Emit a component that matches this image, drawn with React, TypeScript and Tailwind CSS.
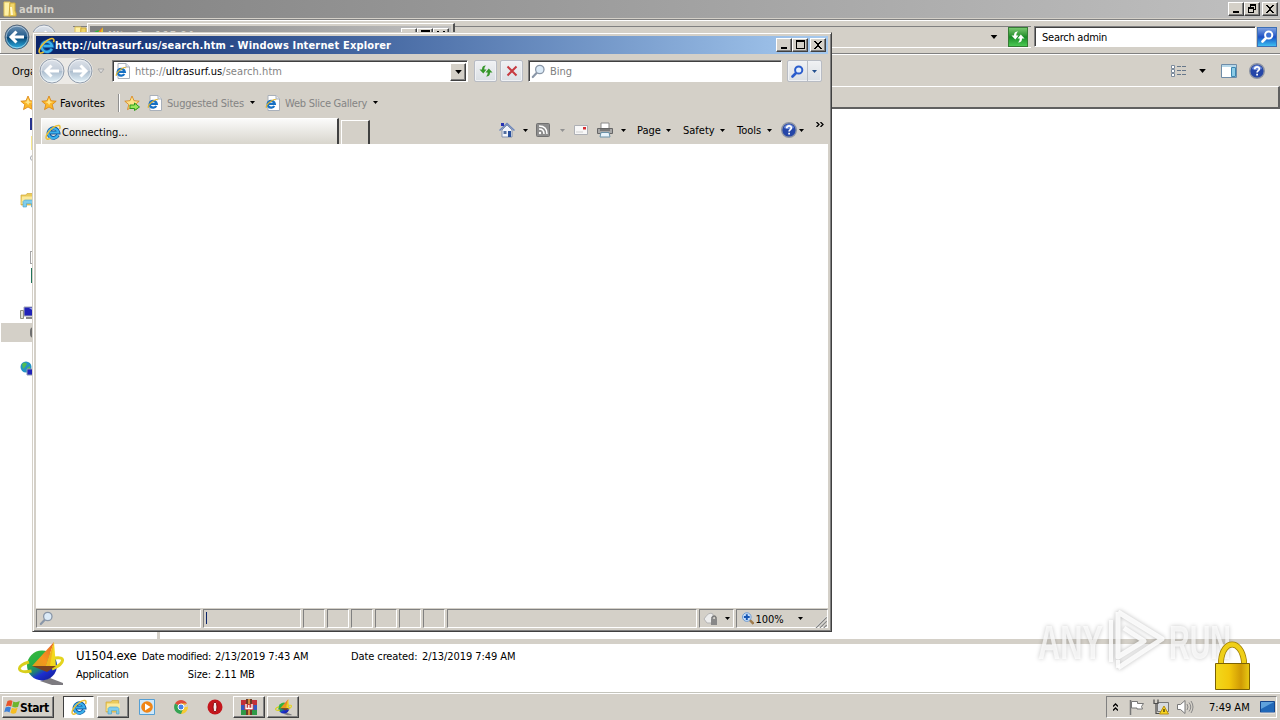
import type { ReactNode } from "react";
import clsx from "clsx";

const raised =
  "border border-t-white border-l-white border-r-[#404040] border-b-[#404040] bg-[#d4d0c8] shadow-[inset_-1px_-1px_0_#808080]";
const sunken =
  "border border-t-[#808080] border-l-[#808080] border-r-white border-b-white";
const field =
  "border border-t-[#808080] border-l-[#808080] border-r-white border-b-white bg-white shadow-[inset_1px_1px_0_#404040]";

function Caret({ className = "" }: { className?: string }) {
  return (
    <svg className={clsx("h-[3px] w-[5px] shrink-0", className)} viewBox="0 0 5 3">
      <path d="M0 0h5L2.5 3z" fill="currentColor" />
    </svg>
  );
}

function IeIcon({ className = "h-4 w-4" }: { className?: string }) {
  return (
    <svg className={clsx("shrink-0", className)} viewBox="0 0 16 16">
      <path
        d="M13 11.200A5 4.800 0 1 1 13.500 8.600H5"
        fill="none"
        stroke="#10579f"
        strokeWidth="3.800"
      />
      <path
        d="M13 11A5 4.800 0 1 1 13.300 8.500H5"
        fill="none"
        stroke="#3bb0ec"
        strokeWidth="2.200"
      />
      <path
        d="M14.600 5C16 1.300 13.500.2 9 3 4.600 6 .2 11.500 1.200 14.300c.6 1.500 2.600.8 4.100-.2"
        fill="none"
        stroke="#ebbf33"
        strokeWidth="1.500"
      />
    </svg>
  );
}

function IePage() {
  return (
    <svg className="h-4 w-4 shrink-0" viewBox="0 0 16 16">
      <path d="M3 .5h8l3.500 3.500v11.500H3z" fill="#fff" stroke="#a9b0ba" />
      <path d="M11 .5V4h3.500" fill="#e4e8ee" stroke="#a9b0ba" />
      <path d="M9.300 11A3.600 3.400 0 1 1 9.800 8.800H3.500" fill="none" stroke="#1670c4" strokeWidth="2.300" />
      <path d="M11 5C9.500 3 .5 9 1.300 12.800" fill="none" stroke="#dcb332" strokeWidth="1.200" />
    </svg>
  );
}

function Star({ arrow = false }: { arrow?: boolean }) {
  return (
    <svg className="h-4 w-4 shrink-0" viewBox="0 0 16 16">
      <path
        d="M8 1l2 4.700 5.200.5-4 3.400 1.300 5L8 12l-4.500 2.600 1.300-5-4-3.400L6 5.700z"
        fill={arrow ? "#fbe08a" : "#fbb829"}
        stroke="#d98312"
        strokeWidth=".8"
      />
      <path d="M8 3l1.200 3.500 3 .5-3 1-1 2-1.500-2-2.500-1 2.500-.5z" fill="#ffe48a" />
      {arrow && <path d="M6 10h4.500V8l5 4-5 3.500v-2H6z" fill="#9be65a" stroke="#2c9a1c" />}
    </svg>
  );
}

function Magnifier({ color = "#8a97a8", fill = "#dcebf8" }: { color?: string; fill?: string }) {
  return (
    <svg className="h-[15px] w-[15px] shrink-0" viewBox="0 0 15 15">
      <path d="M5.800 8.800L1.800 13" stroke={color} strokeWidth="2.200" strokeLinecap="round" />
      <circle cx="8.800" cy="5.500" r="4.200" fill={fill} stroke={color} strokeWidth="1.300" />
    </svg>
  );
}

// small bold lens used on the search buttons
function SearchLens({ color, fill }: { color: string; fill: string }) {
  return (
    <svg className="h-[13px] w-[13px] shrink-0" viewBox="0 0 13 13">
      <path d="M5 8L1.500 11.500" stroke={color} strokeWidth="2.600" strokeLinecap="round" />
      <circle cx="7.700" cy="5" r="3.600" fill={fill} stroke={color} strokeWidth="2" />
    </svg>
  );
}

function Orb({ flip = false, blue = false }: { flip?: boolean; blue?: boolean }) {
  return (
    <svg className="h-[26px] w-[26px] shrink-0" viewBox="0 0 26 26">
      <defs>
        <linearGradient id={blue ? "orbBlue" : "orbGray"} x2="0" y2="1">
          <stop offset="0" stopColor={blue ? "#7395b5" : "#dde2e9"} />
          <stop offset=".48" stopColor={blue ? "#235c8c" : "#c3cdd9"} />
          <stop offset=".5" stopColor={blue ? "#06406f" : "#abbccd"} />
          <stop offset="1" stopColor={blue ? "#2fb6ea" : "#e6f4fb"} />
        </linearGradient>
      </defs>
      <circle cx="13" cy="13" r="12" fill={blue ? "url(#orbBlue)" : "url(#orbGray)"} stroke={blue ? "#56677a" : "#949eac"} />
      <circle cx="13" cy="13" r="10.800" fill="none" stroke="#fff" strokeOpacity=".5" />
      <path
        d="M12.500 7.500L7 13l5.500 5.500M7.500 13H20"
        fill="none"
        stroke="#fff"
        strokeWidth="3"
        transform={flip ? "translate(26 0) scale(-1 1)" : undefined}
      />
    </svg>
  );
}

function Refresh({ color = "#36972a" }: { color?: string }) {
  return (
    <svg className="h-[14px] w-[14px] shrink-0" viewBox="0 0 14 14">
      <path d="M7 1.500C4 1.500 3 3 3 5.500H.5L4.300 9.500 7.500 5.500H5.300C5.300 4 5.500 3 7 1.500z" fill={color} />
      <path d="M7 12.500c3 0 4-1.500 4-4h2.500L9.800 4.500 6.500 8.500h2.200c0 1.500-.2 2.500-1.700 4z" fill={color} />
    </svg>
  );
}

function Help() {
  return (
    <svg className="h-4 w-4 shrink-0" viewBox="0 0 16 16">
      <circle cx="8" cy="8" r="7.300" fill="#2546a8" stroke="#8d94a4" strokeWidth="1.400" />
      <path d="M3 6a5.200 5.200 0 0 1 10 0Q8 8 3 6z" fill="#6f8ddb" />
      <path d="M5.700 6.200C5.700 3 10.500 3.200 10.300 6c0 1.600-2.200 1.700-2.200 3.500" fill="none" stroke="#fff" strokeWidth="1.700" />
      <path d="M7.200 10.800h1.800v1.800H7.200z" fill="#fff" />
    </svg>
  );
}

function Folder({ className = "h-4 w-4" }: { className?: string }) {
  return (
    <svg className={clsx("shrink-0", className)} viewBox="0 0 16 16">
      <path d="M1 3h5l1-1.500h6.500V13H1z" fill="#eacb5a" stroke="#d2aa3c" strokeWidth=".7" />
      <path d="M2 4.500h13V12H1.500z" fill="#fbe99b" />
      <path d="M3 15V9.500L4.500 8h8L14 9.500V15h-2.500v-3.500h-5V15z" fill="#7fcdec" stroke="#4a9fc6" strokeWidth=".6" />
    </svg>
  );
}

function FolderUser() {
  return (
    <svg className="h-4 w-4 shrink-0" viewBox="0 0 16 16">
      <path d="M2 1h6v14H2z" fill="#fff1a6" stroke="#e0c35b" />
      <path d="M8 2h5v8l1 2v3H7z" fill="#f0d568" stroke="#cda93b" />
      <path d="M9 6l1 8" stroke="#fff8cf" strokeWidth="2" />
    </svg>
  );
}

function UltraIcon({ className }: { className: string }) {
  return (
    <svg className={clsx("shrink-0", className)} viewBox="0 0 46 44">
      <defs>
        <linearGradient id="globe" x1=".1" y1="0" x2=".7" y2="1">
          <stop offset="0" stopColor="#3cb83c" />
          <stop offset=".35" stopColor="#28b044" />
          <stop offset=".6" stopColor="#1d7c7c" />
          <stop offset=".75" stopColor="#1c2fd0" />
          <stop offset="1" stopColor="#1420a0" />
        </linearGradient>
        <linearGradient id="sail" x1="1" y1="0" x2="0" y2="1">
          <stop offset="0" stopColor="#e8642a" />
          <stop offset=".6" stopColor="#f5961e" />
          <stop offset="1" stopColor="#d8a01c" />
        </linearGradient>
      </defs>
      <path d="M22 39l10-3 13 5v2H34z" fill="#7d7b80" />
      <circle cx="24" cy="23.500" r="15" fill="url(#globe)" />
      <path d="M11 20Q1 23 1.500 27q1 4 12 2" fill="none" stroke="#d8cf1c" strokeWidth="3" />
      <path d="M37 16q8-1 7.500 2.500Q44 23 34 27" fill="none" stroke="#e4d41e" strokeWidth="3" />
      <path d="M36 0L14 24h14z" fill="url(#sail)" />
      <path d="M36 0L28 24l10 1z" fill="#f3d81e" />
      <path d="M36 0L32 24h-4z" fill="#f0b41e" />
      <path d="M14 24h24l-9 6z" fill="#7a4220" />
    </svg>
  );
}

function Glyph({ kind }: { kind: "min" | "max" | "restore" | "close" }) {
  return (
    <svg className="h-[10px] w-[11px]" viewBox="0 0 11 10" shapeRendering="crispEdges">
      {kind === "min" && <path d="M2 7h6v2H2z" />}
      {kind === "max" && <path d="M1 0h9v9H1zM2 2v6h7V2z" fillRule="evenodd" />}
      {kind === "restore" && (
        <path d="M3 0h6v6H7V5h1V2H4v1H3zM1 3h6v6H1zM2 5v3h4V5z" fillRule="evenodd" />
      )}
      {kind === "close" && (
        <path d="M1 1h2v1h1v1h2V2h1V1h2v1H8v1H7v1H6v2h1v1h1v1h1v1H7V8H6V7H4v1H3v1H1V8h1V7h1V6h1V4H3V3H2V2H1z" />
      )}
    </svg>
  );
}

function CaptionButton({ kind, className = "" }: { kind: "min" | "max" | "restore" | "close"; className?: string }) {
  return (
    <div className={clsx("flex h-[14px] w-4 items-center justify-center", raised, className)}>
      <Glyph kind={kind} />
    </div>
  );
}

function Label({ children, className = "" }: { children: ReactNode; className?: string }) {
  return <span className={clsx("block shrink-0 pt-[2px] whitespace-nowrap", className)}>{children}</span>;
}

function Explorer() {
  return (
    <section className="flex h-[693px] flex-col bg-white">
      <header className="flex h-[18px] items-center bg-linear-to-r from-[#808080] to-[#c0c0c0] pr-[2px] pl-[2px]">
        <FolderUser />
        <Label className="ml-[1px] w-10 font-bold tracking-[0.15px] text-[#d4d0c8]">admin</Label>
        <CaptionButton kind="min" className="ml-auto" />
        <CaptionButton kind="restore" />
        <CaptionButton kind="close" className="ml-[2px]" />
      </header>
      <div className="h-[2px] border-b border-[#808080] bg-[#d4d0c8]" />
      <div className="flex h-[34px] items-center border-b border-[#808080] bg-[#d4d0c8] pl-[4px] shadow-[inset_1px_1px_0_#fff]">
        <Orb blue />
        <div className="ml-[1px]">
          <Orb flip />
        </div>
        <div className="ml-4 flex h-[22px] w-[958px] items-center justify-end border-t border-b border-t-[#808080] border-b-white pr-[33px]">
          <Caret className="h-1! w-2!" />
        </div>
        <div className="-ml-[23px] flex h-5 w-5 items-center justify-center border border-[#367b34] bg-linear-to-b from-[#77c76f] via-[#158c25] to-[#4bc953]">
          <Refresh color="#fff" />
        </div>
        <div className={clsx("ml-[6px] flex h-[21px] w-[222px] items-center pl-[7px]", field)}>
          <Label className="tracking-[-0.25px]">Search admin</Label>
        </div>
        <div className="ml-[1px] flex h-5 w-5 items-center justify-center border border-[#3d6fb4] bg-linear-to-b from-[#7da0df] via-[#1e4fc4] to-[#41bef0]">
          <SearchLens color="#fff" fill="#3c71d4" />
        </div>
      </div>
      <div className="flex h-8 items-center justify-between border-t border-white bg-[#d4d0c8] pr-[15px] pl-3">
        <Label>Organize</Label>
        <div className="flex items-center">
          <svg className="h-3 w-4" viewBox="0 0 16 12">
            {[0, 4, 8].map((y) => (
              <g key={y}>
                <path d={`M.5 ${y + 0.5}h3v3h-3z`} fill="#fff" stroke="#7c8b9c" />
                <path d={`M6 ${y + 1.5}h4m1 0h4`} stroke="#66778a" />
              </g>
            ))}
          </svg>
          <Caret className="mr-[15px] ml-3 h-1! w-[7px]!" />
          <svg className="mr-3 h-[14px] w-4" viewBox="0 0 16 14">
            <path d="M.5.500h15v13H.5z" fill="#fff" stroke="#6e8ca8" />
            <path d="M1 1h14v2H1z" fill="#b6d8ea" />
            <path d="M10.500 3.500h4v9h-4z" fill="#8ccbe6" stroke="#3b87b1" />
          </svg>
          <Help />
        </div>
      </div>
      <div className="flex h-[553px]">
        <NavPane />
        <div className="w-[3px] bg-[#d4d0c8]" />
        <div className="flex-1">
          <div className="h-[23px] border-t border-r-2 border-b-2 border-t-white border-r-[#606060] border-b-[#606060] bg-[#d4d0c8]" />
        </div>
      </div>
      <DetailsPane />
    </section>
  );
}

function NavPane() {
  return (
    <div className="flex w-[157px] flex-col pl-[1px]">
      <div className="mt-[9px] ml-[19px] h-4">
        <Star />
      </div>
      <div className="mt-[7px] ml-[29px] h-3 w-4 bg-[#28338e]" />
      <div className="mt-[6px] ml-[30px] h-[14px] w-4 bg-[#f7e98e]" />
      <div className="mt-[5px] ml-[29px] h-[6px] w-4 rounded-sm border border-[#a4a8b0]" />
      <div className="mt-[31px] ml-[19px] h-4">
        <Folder />
      </div>
      <div className="mt-[43px] ml-[29px] h-[13px] w-4 border border-[#a4a4a4]" />
      <div className="mt-[4px] ml-[30px] h-[15px] w-4 bg-[#23745a]" />
      <svg className="mt-[22px] ml-[19px] h-4 w-4" viewBox="0 0 16 16">
        <path d="M4 2h11v9H4z" fill="#2022b8" stroke="#a3a7b5" />
        <path d="M9 3h5v3z" fill="#9ba7ee" />
        <path d="M.5 5.500h3v8h-3z" fill="#dfe1d6" stroke="#8d9082" />
        <path d="M6 13h9" stroke="#888" strokeWidth="2" />
      </svg>
      <div className="mt-[2px] flex h-[19px] items-center bg-[#d4d0c8] pl-[29px]">
        <div className="h-[11px] w-3 rounded-sm bg-[#6f6f6f]" />
      </div>
      <svg className="mt-[19px] ml-[19px] h-4 w-4" viewBox="0 0 16 16">
        <circle cx="6" cy="6" r="5.500" fill="#2492c4" />
        <path d="M2 3q3-3 5 0l-2 3-2 2zm5 4l3-2v5H7z" fill="#4dbd54" />
        <path d="M7 8h8v6H7z" fill="#2022b8" stroke="#8c97b4" />
      </svg>
    </div>
  );
}

function DetailsPane() {
  return (
    <div className="flex h-[54px] border-t-[5px] border-b border-t-[#d4d0c8] border-b-[#c4c4bc] bg-white">
      <UltraIcon className="mt-[-2px] ml-[18px] h-[44px] w-[46px]" />
      <div className="ml-3 flex w-[65px] flex-col pt-[2px]">
        <Label className="h-[18px] text-[13px] leading-4 tracking-[-0.25px]">U1504.exe</Label>
        <Label className="leading-[18px] tracking-[-0.25px]">Application</Label>
      </div>
      <div className="flex w-[70px] flex-col items-end pt-[2px] leading-[18px]">
        <Label className="h-[18px] tracking-[-0.3px]">Date modified:</Label>
        <Label className="h-[18px] tracking-[-0.1px]">Size:</Label>
      </div>
      <div className="ml-1 w-[136px] pt-[2px] leading-[18px]">
        <Label className="h-[18px] tracking-[-0.07px]">2/13/2019 7:43 AM</Label>
        <Label className="h-[18px] tracking-[-0.1px]">2.11 MB</Label>
      </div>
      <Label className="w-[71px] pt-[4px] leading-[18px] tracking-[-0.1px]">Date created:</Label>
      <Label className="pt-[4px] leading-[18px] tracking-[-0.07px]">2/13/2019 7:49 AM</Label>
    </div>
  );
}

// only the top strip of this one shows above the browser
function UltraSurfWindow() {
  return (
    <section className="absolute top-[23px] left-[73px] flex h-10 w-[382px] items-start overflow-hidden">
      <div className="mt-[3px] h-4 w-[14px]">
        <FolderUser />
      </div>
      <div className="flex-1 border-t border-r-2 border-l border-t-white border-r-[#505050] border-l-white bg-[#d4d0c8] p-[2px]">
        <div className="flex h-[18px] items-center bg-linear-to-r from-[#808080] to-[#c0c0c0] pr-[2px]">
          <UltraIcon className="h-4 w-4" />
          <Label className="ml-[2px] font-bold text-[#d4d0c8]">UltraSurf 15.04</Label>
          <CaptionButton kind="min" className="ml-auto" />
          <CaptionButton kind="max" />
          <CaptionButton kind="close" />
        </div>
      </div>
    </section>
  );
}

function ToolButton({ children, className = "w-[23px]" }: { children: ReactNode; className?: string }) {
  return (
    <div
      className={clsx(
        "flex h-[22px] items-center justify-center rounded-[2px] border border-[#b8bcc4] bg-linear-to-b from-[#f0f1f3] to-[#dadfe4] shadow-[inset_0_0_0_1px_#f0f2f5]",
        className,
      )}
    >
      {children}
    </div>
  );
}

function Browser() {
  return (
    <section className="absolute top-8 left-8 flex h-[600px] w-[800px] flex-col border border-t-[#d4d0c8] border-r-[#404040] border-b-[#404040] border-l-[#d4d0c8] bg-[#d4d0c8] pt-[3px] pr-[3px] pb-[3px] pl-[3px] shadow-[inset_1px_1px_0_#fff,inset_-1px_-1px_0_#808080]">
      <header className="flex h-[18px] items-center bg-linear-to-r from-[#0a246a] to-[#a6caf0] pr-[2px] pl-[2px]">
        <IeIcon className="h-[17px] w-[17px]" />
        <Label className="font-bold tracking-[0.16px] text-white">
          http://ultrasurf.us/search.htm - Windows Internet Explorer
        </Label>
        <CaptionButton kind="min" className="ml-auto" />
        <CaptionButton kind="max" />
        <CaptionButton kind="close" className="ml-[2px]" />
      </header>

      <div className="flex h-[34px] items-center pl-[3px]">
        <div className="flex items-center gap-[2px] rounded-full bg-[#eceae6]">
          <Orb />
          <Orb flip />
        </div>
        <svg className="ml-1 h-[6px] w-2" viewBox="0 0 8 6">
          <path d="M1 1h6L4 5z" fill="#ddd" stroke="#aaa" />
        </svg>
        <div className={clsx("ml-[7px] flex h-[22px] w-[356px] items-center pl-[2px]", field)}>
          <IePage />
          <Label className="ml-[4px] tracking-[0.06px] text-[#848484]">
            http://<span className="text-black">ultrasurf.us</span>/search.htm
          </Label>
          <div className={clsx("mt-[1px] mr-px ml-auto flex h-[18px] w-4 items-center justify-center", raised)}>
            <Caret className="h-1! w-[7px]!" />
          </div>
        </div>
        <div className="ml-[6px] flex gap-[3px]">
          <ToolButton>
            <Refresh />
          </ToolButton>
          <ToolButton>
            <svg className="h-3 w-3" viewBox="0 0 12 12">
              <path d="M1.500 1.500l9 9M10.500 1.500l-9 9" stroke="#c73a40" strokeWidth="2" />
            </svg>
          </ToolButton>
        </div>
        <div className={clsx("ml-[5px] flex h-[22px] w-[254px] items-center pl-[2px]", field)}>
          <Magnifier />
          <Label className="ml-1 text-[#808080]">Bing</Label>
        </div>
        <ToolButton className="ml-[5px] w-[35px]">
          <div className="flex h-full w-5 items-center justify-center border-r border-[#b8bcc4]">
            <SearchLens color="#2a5ccc" fill="#e4effc" />
          </div>
          <div className="flex flex-1 justify-center">
            <Caret className="text-[#23508e]" />
          </div>
        </ToolButton>
      </div>

      <div className="flex h-[29px] items-center pl-[5px] text-[#848484]">
        <Star />
        <Label className="ml-[3px] w-[58px] tracking-[0.05px] text-black">Favorites</Label>
        <div className="h-[18px] w-[2px] border-r border-l border-r-white border-l-[#909090]" />
        <div className="ml-[4px]">
          <Star arrow />
        </div>
        <div className="ml-[7px]">
          <IePage />
        </div>
        <Label className="ml-[4px] w-[83px] tracking-[-0.2px]">Suggested Sites</Label>
        <Caret className="text-black" />
        <div className="ml-[10px]">
          <IePage />
        </div>
        <Label className="ml-[4px] w-[88px] tracking-[-0.25px]">Web Slice Gallery</Label>
        <Caret className="text-black" />
      </div>

      <div className="flex h-[27px] items-end pl-[5px]">
        <div className="flex h-[26px] w-[298px] items-center border-t border-r-2 border-l border-t-white border-r-[#404040] border-l-white bg-linear-to-b from-[#fbfbfa] to-[#d8d5cd] pl-[3px]">
          <IeIcon />
          <Label className="ml-[1px]">Connecting...</Label>
        </div>
        <div className="ml-[2px] h-6 w-[29px] border-t border-r-2 border-l border-t-white border-r-[#404040] border-l-white" />
        <div className="ml-[129px] flex h-7 flex-1 items-center">
          <svg className="h-4 w-4 shrink-0" viewBox="0 0 16 16">
            <path d="M3 8v7h10V8L8 3z" fill="#f1f4fa" stroke="#8492ac" />
            <path d="M.5 8.500L8 1.500l7.500 7" fill="none" stroke="#6c86bd" strokeWidth="1.500" />
            <path d="M2 1h3v3H2z" fill="#2733b4" />
            <path d="M9 9h3v6H9z" fill="#28509d" />
            <path d="M4.500 9h3v3h-3z" fill="#526e9f" />
          </svg>
          <Caret className="ml-2" />
          <svg className="ml-2 h-[14px] w-[14px] shrink-0" viewBox="0 0 14 14">
            <rect x=".5" y=".5" width="13" height="13" rx="1" fill="#8d8d8d" stroke="#707070" />
            <path d="M3 6q5 0 5 5M3 3q8 0 8 8" fill="none" stroke="#fff" strokeWidth="1.500" />
            <circle cx="4" cy="10" r="1.200" fill="#fff" />
          </svg>
          <Caret className="ml-[10px] text-[#929292]" />
          <svg className="ml-[9px] h-[10px] w-[14px] shrink-0" viewBox="0 0 14 10">
            <path d="M.5.5h13v9H.5z" fill="#f8f8f8" stroke="#aeb0b5" />
            <path d="M9 2h3v2.500H9z" fill="#d62f32" />
            <path d="M2 7h7" stroke="#d0d0d0" />
          </svg>
          <svg className="ml-[9px] h-4 w-4 shrink-0" viewBox="0 0 16 16">
            <path d="M4 1h8v6H4z" fill="#fff" stroke="#8a8a8a" />
            <path d="M.5 6.500h15v5H.5z" fill="#a8a8a8" stroke="#666" />
            <path d="M3 8h10" stroke="#4d4d4d" />
            <path d="M4 10.500h8l1 4.500H3z" fill="#e8f4fc" stroke="#6a92a9" />
          </svg>
          <Caret className="ml-2" />
          <Label className="ml-[11px] w-[29px]">Page</Label>
          <Caret />
          <Label className="ml-3 w-[37px]">Safety</Label>
          <Caret />
          <Label className="ml-3 w-[30px]">Tools</Label>
          <Caret />
          <div className="ml-[9px]">
            <Help />
          </div>
          <Caret className="ml-[2px]" />
          <svg className="mb-3 ml-[12px] h-[5px] w-2 shrink-0" viewBox="0 0 8 5">
            <path d="M.5 0L3 2.500.5 5M4.500 0L7 2.500 4.500 5" fill="none" stroke="#000" strokeWidth="1.300" />
          </svg>
        </div>
      </div>

      <div className="flex-1 bg-white" />

      <footer className="flex h-[20px] gap-[2px] pt-[1px]">
        <div className={clsx("flex w-[165px] items-center pl-[2px]", sunken)}>
          <Magnifier />
        </div>
        <div className={clsx("w-[98px] py-[2px] pl-[2px]", sunken)}>
          <div className="h-3 w-px bg-[#0a246a]" />
        </div>
        {[0, 1, 2, 3, 4, 5].map((i) => (
          <div key={i} className={clsx("w-[22px]", sunken)} />
        ))}
        <div className={clsx("flex-1", sunken)} />
        <div className={clsx("flex w-[35px] items-center justify-between pr-[3px] pl-[3px]", sunken)}>
          <svg className="h-[14px] w-4" viewBox="0 0 16 14">
            <path d="M1 7q5-8 9-5v9H4z" fill="#ededed" stroke="#b5b5b5" />
            <path d="M9 7V5.500q2.500-3 4 0V7" fill="none" stroke="#777" strokeWidth="1.500" />
            <path d="M8 7h6v6H8z" fill="#888" />
          </svg>
          <Caret />
        </div>
        <div className={clsx("flex w-[92px] items-center pl-[5px]", sunken)}>
          <svg className="h-[13px] w-[13px]" viewBox="0 0 13 13">
            <path d="M8 8l4 4" stroke="#a07c4c" strokeWidth="2.500" />
            <circle cx="5" cy="5" r="4.500" fill="#c6defa" stroke="#6e9ad0" />
            <path d="M5 2v6M2 5h6" stroke="#1656b4" strokeWidth="2" />
          </svg>
          <Label className="ml-[1px] w-[43px]">100%</Label>
          <Caret />
          <svg className="mt-[6px] ml-[12px] h-3 w-3" viewBox="0 0 12 12">
            <path d="M1 12L12 1M5 12l7-7M9 12l3-3" stroke="#808080" strokeWidth="1.500" />
            <path d="M0 12L12 0M4 12l8-8M8 12l4-4" stroke="#fff" strokeWidth=".7" />
          </svg>
        </div>
      </footer>
    </section>
  );
}

function Watermark() {
  return (
    <svg
      className="absolute top-[604px] left-[1032px] h-[74px] w-[208px] drop-shadow-[0_0_2px_rgba(0,0,0,0.3)]"
      viewBox="0 0 208 74"
    >
      <g fill="#fff" fillOpacity=".72" className="font-['Liberation_Sans'] font-bold">
        <text x="6" y="55" fontSize="49" textLength="65" lengthAdjust="spacingAndGlyphs">
          ANY
        </text>
        <text x="137" y="55" fontSize="49" textLength="62" lengthAdjust="spacingAndGlyphs">
          RUN
        </text>
      </g>
      <path
        d="M86 8l44 27-44 29M86 8v45l26-16-20-13"
        fill="none"
        stroke="#fff"
        strokeOpacity=".85"
        strokeWidth="5"
        strokeLinejoin="round"
      />
      <path d="M79 16v42M86 56v8" stroke="#fff" strokeWidth="4" strokeOpacity=".85" />
    </svg>
  );
}

function Padlock() {
  return (
    <svg className="absolute top-[641px] left-[1214px] h-[49px] w-[38px]" viewBox="0 0 38 49">
      <defs>
        <linearGradient id="brass">
          <stop offset="0" stopColor="#f2d81c" />
          <stop offset=".4" stopColor="#f2c80c" />
          <stop offset=".75" stopColor="#cf9a05" />
          <stop offset="1" stopColor="#e9cb12" />
        </linearGradient>
      </defs>
      <path d="M7 24v-4C9-2 27-2 30 20v4" fill="none" stroke="#9d7d06" strokeWidth="6" />
      <path d="M7 24v-4C9-2 27-2 30 20v4" fill="none" stroke="#efcf18" strokeWidth="4.400" />
      <path d="M1.500 22.500h34v26h-34z" fill="url(#brass)" stroke="#7c6204" />
    </svg>
  );
}

function TaskItem({ children, className = "" }: { children: ReactNode; className?: string }) {
  return <div className={clsx("flex h-[22px] items-center justify-center", className)}>{children}</div>;
}

function Taskbar() {
  return (
    <footer className="flex h-[27px] items-start border-t border-white bg-[#d4d0c8] pt-[2px] pr-[3px] pl-[2px]">
      <div className={clsx("flex h-[22px] w-[52px] items-center pl-[1px]", raised)}>
        <svg className="h-4 w-4 shrink-0" viewBox="0 0 16 16">
          <path d="M3.500 2q3-1.500 5 0L7.300 7.500q-3-1.500-5.500 0z" fill="#e8542a" />
          <path d="M9.300 2.500q3 1.500 6.500-.5l-1.800 6Q11 9 8.200 7.700z" fill="#6cb52d" />
          <path d="M1.500 8.500q3-1.500 5.500 0L5.500 13.500q-2.500-2-5.300-.3z" fill="#3d80d8" />
          <path d="M7.900 8.800q3 1.500 5.700 0L12 14q-3 1.500-5.500-.2z" fill="#f6bd22" />
        </svg>
        <Label className="text-[12px] font-bold tracking-[-0.4px]">Start</Label>
      </div>
      <TaskItem
        className={clsx("ml-[9px] w-[31px] bg-white", "border border-t-[#404040] border-l-[#404040] border-r-white border-b-white")}
      >
        <IeIcon />
      </TaskItem>
      <TaskItem className={clsx("ml-[3px] w-8", raised)}>
        <Folder />
      </TaskItem>
      <TaskItem className="w-9">
        <svg className="h-4 w-4" viewBox="0 0 16 16">
          <path d="M.5.5h15v15H.5z" fill="#cfe8fa" stroke="#559fd4" />
          <circle cx="8" cy="8" r="5.800" fill="#f08516" />
          <path d="M6 4.500L11.500 8 6 11.500z" fill="#fff" />
        </svg>
      </TaskItem>
      <TaskItem className="w-8">
        <svg className="h-[14px] w-[14px]" viewBox="0 0 14 14">
          <path d="M7 7L1 3.500A7 7 0 0 1 13 3.500z" fill="#df4c3b" />
          <path d="M7 7h6.500A7 7 0 0 0 13 3.500H7M7 7L13 3.500A7 7 0 0 1 7 14z" fill="#f6cb35" />
          <path d="M7 7L1 3.500A7 7 0 0 0 7 14L9 9z" fill="#35a453" />
          <circle cx="7" cy="7" r="3" fill="#4682e8" stroke="#fff" />
        </svg>
      </TaskItem>
      <TaskItem className="w-9">
        <svg className="h-4 w-4" viewBox="0 0 16 16">
          <circle cx="8" cy="8" r="7.500" fill="#c4161c" />
          <ellipse cx="8" cy="8" rx="2" ry="5" fill="#f4ecec" stroke="#8a0c10" />
        </svg>
      </TaskItem>
      <TaskItem className={clsx("w-8", raised)}>
        <svg className="h-4 w-4" viewBox="0 0 16 16">
          <path d="M0 1h16v5H0z" fill="#c23038" />
          <path d="M0 6h16v5H0z" fill="#3458c0" />
          <path d="M0 11h16v5H0z" fill="#2f9a48" />
          <path d="M5 0h2v16H5zM9 0h2v16H9z" fill="#6e3a26" />
          <path d="M7 0h2v16H7z" fill="#d08a3c" />
          <path d="M3.500 5h9v6h-9z" fill="#c83c3c" />
          <path d="M5 5v4.500h2.800V6v3.500H11V5" fill="none" stroke="#fff" strokeWidth="1.300" />
        </svg>
      </TaskItem>
      <TaskItem className={clsx("ml-[2px] w-8", raised)}>
        <UltraIcon className="h-[17px] w-[17px]" />
      </TaskItem>

      <div className={clsx("ml-auto flex h-[22px] w-[171px] items-center pl-[6px]", sunken)}>
        <svg className="h-2 w-[5px]" viewBox="0 0 5 8">
          <path d="M0 3.500L2.500 1 5 3.500M0 7.500L2.500 5 5 7.500" fill="none" stroke="#000" strokeWidth="1.300" />
        </svg>
        <svg className="ml-[11px] h-[15px] w-4" viewBox="0 0 16 15">
          <path d="M1.500 0v15" stroke="#777" strokeWidth="1.500" />
          <path d="M2.500 1.500h6v2h6l-2 3 1 2.500H8V8H2.500z" fill="#fff" stroke="#777" />
        </svg>
        <svg className="ml-2 h-4 w-4" viewBox="0 0 16 16">
          <path d="M4.500 3.500h11v9h-11z" fill="#d7dade" stroke="#777" />
          <path d="M1 .5v4h4v-4M3 5v9.500h6" fill="none" stroke="#4c4c4c" strokeWidth="1.200" />
          <path d="M11 7l4.500 8h-9z" fill="#f8d51f" stroke="#b88f11" />
          <path d="M11 10v3" stroke="#000" />
        </svg>
        <svg className="ml-2 h-4 w-[17px]" viewBox="0 0 17 16">
          <path d="M.5 5.500h3L8 1.500v13l-4.500-4h-3z" fill="#fff" stroke="#777" />
          <path d="M10 5q2 3 0 6M12 3.500q3.500 4.500 0 9M14 2q4 6 0 12" fill="none" stroke="#888" />
        </svg>
        <Label className="ml-[15px] w-[51px]">7:49 AM</Label>
        <svg className="h-[13px] w-[15px]" viewBox="0 0 15 13">
          <path d="M.5.500h14v11H.5z" fill="#2168b8" stroke="#15458c" />
          <path d="M1 1h13L1 8z" fill="#5fa2dd" />
          <path d="M0 12h15" stroke="#eee" />
        </svg>
      </div>
    </footer>
  );
}

export default function App() {
  return (
    <main className="relative h-[720px] w-[1280px] overflow-hidden bg-[#d4d0c8] font-['DejaVu_Sans_Condensed','DejaVu_Sans',sans-serif] text-[11px] leading-[14px] text-black">
      <Explorer />
      <Taskbar />
      <UltraSurfWindow />
      <Browser />
      <Watermark />
      <Padlock />
    </main>
  );
}
